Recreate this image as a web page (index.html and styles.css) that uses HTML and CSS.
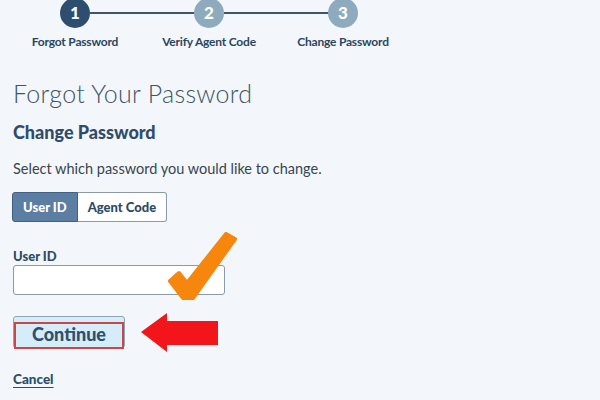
FILE: index.html
```html
<!DOCTYPE html>
<html>
<head>
<meta charset="utf-8">
<link rel="stylesheet" href="styles.css">
</head>
<body>
<div class="page">
  <div class="stepper">
    <div class="step active"><span class="dot">1</span><span class="label">Forgot Password</span></div>
    <div class="step"><span class="dot">2</span><span class="label">Verify Agent Code</span></div>
    <div class="step last"><span class="dot">3</span><span class="label">Change Password</span></div>
  </div>
  <div class="content">
    <h1 class="title">Forgot Your Password</h1>
    <h2 class="subtitle">Change Password</h2>
    <p class="desc">Select which password you would like to change.</p>
    <div class="toggle">
      <span class="seg on">User ID</span><span class="seg">Agent Code</span>
    </div>
    <label class="field-label">User ID</label>
    <div class="input-row">
      <div class="input"></div>
      <svg class="check" width="72" height="70" viewBox="0 0 72 70">
        <polygon points="4,49 13,41 21,51 60,2 69,7 27,66 17,66" fill="#f7860c" stroke="#f7860c" stroke-width="4" stroke-linejoin="round"/>
      </svg>
    </div>
    <div class="btn-row">
      <button class="continue"><span class="ring">Continue</span></button>
      <svg class="arrow" width="78" height="40" viewBox="0 0 78 40">
        <polygon points="0,19 26,0 26,8 77,8 77,32 26,32 26,39" fill="#f2161b"/>
      </svg>
    </div>
    <a class="cancel" href="#">Cancel</a>
  </div>
</div>
</body>
</html>
```
FILE: styles.css
```css
html, body {
  margin: 0;
  padding: 0;
  background: #f3f7fb;
  font-family: Lato, "Open Sans", sans-serif;
}
.page {
  width: 600px;
  height: 400px;
  overflow: hidden;
}
.stepper {
  display: flex;
  margin-left: 8px;
  margin-top: -2px;
}
.step {
  width: 134px;
  display: flex;
  flex-direction: column;
  align-items: center;
  position: relative;
}
.step::after {
  content: "";
  position: absolute;
  left: 82px;
  top: 14px;
  width: 106px;
  height: 2px;
  background: #3f5568;
}
.step.last::after { display: none; }
.dot {
  width: 30px;
  height: 30px;
  border-radius: 50%;
  background: #8eabbd;
  color: #fff;
  font-weight: 900;
  font-size: 17px;
  line-height: 30px;
  text-align: center;
}
.step.active .dot { background: #2d4e6f; }
.label {
  margin-top: 6px;
  font-size: 12px;
  font-weight: 700;
  color: #2a4560;
  letter-spacing: -0.2px;
  white-space: nowrap;
}
.content {
  padding-left: 13px;
}
.title {
  margin: 29px 0 0;
  font-size: 25px;
  font-weight: 300;
  color: #3f5565;
  line-height: 30px;
  letter-spacing: 0.3px;
}
.subtitle {
  margin: 13px 0 0;
  font-size: 18px;
  font-weight: 900;
  color: #2f4d6b;
  line-height: 22px;
}
.desc {
  margin: 17px 0 0;
  font-size: 14.5px;
  color: #37454f;
  line-height: 18px;
}
.toggle {
  margin-top: 14px;
  margin-left: -1px;
  display: inline-flex;
  height: 30px;
}
.seg {
  display: flex;
  align-items: center;
  padding: 0 10px;
  font-size: 13px;
  font-weight: 900;
  color: #2f4a63;
  background: #fff;
  border: 1px solid #8a9aa8;
  border-left: none;
  border-radius: 0 3px 3px 0;
}
.seg.on {
  background: #5b7ea2;
  color: #fff;
  border: 1px solid #3f6185;
  border-radius: 3px 0 0 3px;
  padding: 0 10px;
}
.field-label {
  display: block;
  margin-top: 26px;
  font-size: 13px;
  font-weight: 900;
  color: #2f4a63;
  line-height: 16px;
}
.input-row {
  position: relative;
  margin-top: 1px;
}
.input {
  width: 210px;
  height: 28px;
  background: #fff;
  border: 1px solid #8a9aa8;
  border-radius: 3px;
}
.check {
  position: absolute;
  left: 153px;
  top: -33px;
}
.btn-row {
  position: relative;
  margin-top: 21px;
}
.continue {
  display: block;
  width: 112px;
  height: 32px;
  padding: 5px 0 0;
  background: #d4edf9;
  border: 1px solid #8ea5b5;
  border-radius: 3px;
  font-family: Lato, "Open Sans", sans-serif;
}
.ring {
  display: block;
  height: 23px;
  margin: 0;
  border: 2px solid #c9474a;
  font-size: 18px;
  font-weight: 900;
  color: #2f4f6d;
  line-height: 21px;
  text-align: center;
}
.arrow {
  position: absolute;
  left: 128px;
  top: -3px;
}
.cancel {
  display: inline-block;
  margin-top: 23px;
  font-size: 13.5px;
  font-weight: 900;
  color: #2f4d6b;
  text-decoration: underline;
  text-underline-offset: 3px;
}
```
